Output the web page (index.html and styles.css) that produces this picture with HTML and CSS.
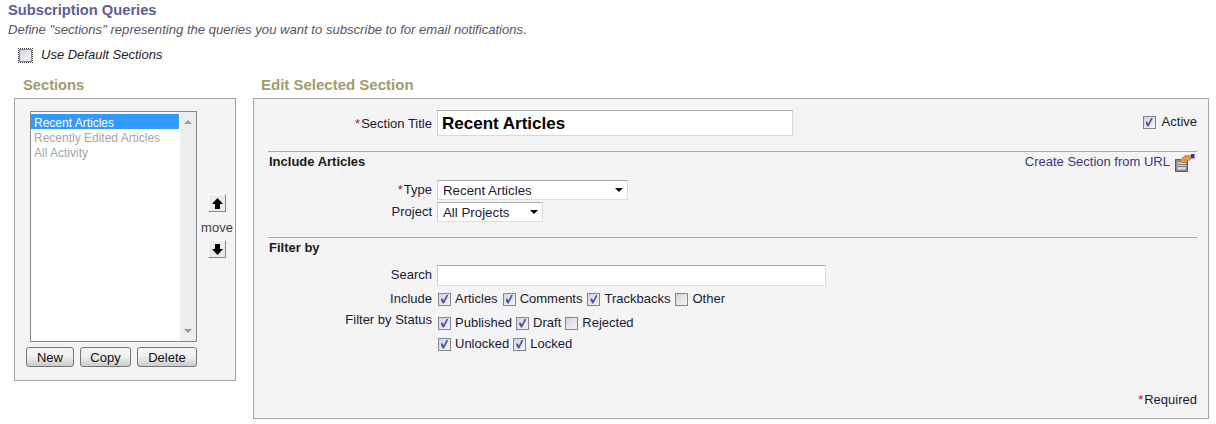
FILE: index.html
```html
<!DOCTYPE html>
<html lang="en">
<head>
  <meta charset="UTF-8">
  <title>Subscription Queries</title>
  <link rel="stylesheet" href="styles.css">
</head>
<body>
  <h1 class="page-title">Subscription Queries</h1>
  <p class="page-desc">Define "sections" representing the queries you want to subscribe to for email notifications.</p>
  <label class="default-row"><span class="cb default-cb"></span>Use Default Sections</label>

  <div class="columns">
    <div class="col-sections">
      <h2 class="col-title">Sections</h2>
      <div class="box sections-box">
        <div class="list-row">
          <div class="listbox">
            <div class="list-items">
              <div class="list-item selected">Recent Articles</div>
              <div class="list-item">Recently Edited Articles</div>
              <div class="list-item">All Activity</div>
            </div>
            <div class="scrollbar">
              <span class="scroll-up"></span>
              <span class="scroll-down"></span>
            </div>
          </div>
          <div class="move">
            <button class="move-btn">
              <svg width="13" height="13" viewBox="0 0 13 13"><path d="M6.5 1 12 7H9V12H4V7H1Z" fill="#000"/></svg>
            </button>
            <span class="move-label">move</span>
            <button class="move-btn">
              <svg width="13" height="13" viewBox="0 0 13 13"><path d="M6.5 12 12 6H9V1H4V6H1Z" fill="#000"/></svg>
            </button>
          </div>
        </div>
        <div class="list-actions">
          <button class="btn btn-new">New</button>
          <button class="btn btn-copy">Copy</button>
          <button class="btn btn-delete">Delete</button>
        </div>
      </div>
    </div>

    <div class="col-edit">
      <h2 class="col-title">Edit Selected Section</h2>
      <div class="box edit-box">
        <div class="title-row">
          <label class="field-label title-label"><span class="req">*</span>Section Title</label>
          <input class="title-input" type="text" value="Recent Articles">
          <label class="active"><span class="cb on"></span>Active</label>
        </div>

        <div class="group-head include-head">
          <span class="group-name">Include Articles</span>
          <a class="url-link">Create Section from URL
            <svg class="url-icon" width="20" height="18" viewBox="0 0 20 18">
              <path d="M.5 5.5H12.5V17.5H.5Z" fill="#8f8f8f" stroke="#5a5a5a"/>
              <path d="M2.5 8.5H10.5V15.5H2.5Z" fill="#dcdcdc"/>
              <path d="M2.5 10.5H10.5M2.5 12.5H10.5" stroke="#777"/>
              <path d="M5 6 10 1.5H15.5V5.5L11 7.5 8 9Z" fill="#e49a45" stroke="#a96c28" stroke-width=".6"/>
              <path d="M16 0H19.5V4.5H16Z" fill="#3a2fa8"/>
            </svg>
          </a>
        </div>
        <div class="field-row type-row">
          <label class="field-label"><span class="req">*</span>Type</label>
          <span class="select-wrap type-select"><select><option>Recent Articles</option></select></span>
        </div>
        <div class="field-row project-row">
          <label class="field-label">Project</label>
          <span class="select-wrap project-select"><select><option>All Projects</option></select></span>
        </div>

        <div class="group-head filter-head">
          <span class="group-name">Filter by</span>
        </div>
        <div class="field-row search-row">
          <label class="field-label">Search</label>
          <input class="search-input" type="text">
        </div>
        <div class="field-row include-row">
          <label class="field-label">Include</label>
          <div class="checks">
            <label class="check"><span class="cb on"></span>Articles</label>
            <label class="check"><span class="cb on"></span>Comments</label>
            <label class="check"><span class="cb on"></span>Trackbacks</label>
            <label class="check"><span class="cb"></span>Other</label>
          </div>
        </div>
        <div class="field-row status-row">
          <label class="field-label">Filter by Status</label>
          <div class="status-lines">
            <div class="checks">
              <label class="check"><span class="cb on"></span>Published</label>
              <label class="check"><span class="cb on"></span>Draft</label>
              <label class="check"><span class="cb"></span>Rejected</label>
            </div>
            <div class="checks">
              <label class="check"><span class="cb on"></span>Unlocked</label>
              <label class="check"><span class="cb on"></span>Locked</label>
            </div>
          </div>
        </div>
        <div class="required"><span class="req">*</span>Required</div>
      </div>
    </div>
  </div>
</body>
</html>
```

FILE: styles.css
```css
html, body { margin: 0; padding: 0; }
body { width: 1216px; height: 424px; overflow: hidden; background: #fff; color: #1a1a33; font-family: "Liberation Sans", Arial, sans-serif; font-size: 13px; line-height: 14px; padding: 2px 0 0 8px; box-sizing: border-box; }
button, input, select { font-family: inherit; }

.page-title { margin: 0; font-size: 14.7px; line-height: 16px; font-weight: bold; color: #5f5d92; }
.page-desc { margin: 5px 0 0; font-size: 13.1px; font-style: italic; color: #55555f; line-height: 14px; }
.default-row { display: flex; align-items: center; margin: 11px 0 0 11px; font-style: italic; color: #222; }
.default-cb { margin-right: 9px; outline: 1px dotted #444; outline-offset: 0; }

.columns { display: flex; margin: 15px 0 0 6px; }
.col-sections { width: 222px; }
.col-edit { width: 956px; margin-left: 17px; }
.col-title { margin: 0 0 5px 9px; font-size: 14.7px; line-height: 16px; font-weight: bold; color: #a19c6c; }
.col-edit .col-title { margin-left: 8px; font-size: 15px; }
.box { border: 1px solid #a3a3a3; background: #f4f4f4; box-sizing: border-box; }

.sections-box { height: 283px; padding: 12px 0 0 15px; }
.list-row { display: flex; }
.listbox { display: flex; width: 167px; height: 231px; border: 1px solid #87878f; background: #fff; box-sizing: border-box; }
.list-items { width: 148px; padding-top: 2px; }
.list-item { height: 15px; line-height: 19px; padding-left: 3px; color: #a3a3a8; font-size: 12px; }
.list-item.selected { background: #3399ff; color: #fff; }
.scrollbar { flex: 1; margin-left: 1px; background: linear-gradient(90deg, #ededed 50%, #f3f3f3 50%, #ededed 60%); display: flex; flex-direction: column; justify-content: space-between; align-items: center; padding: 8px 0; box-sizing: border-box; }
.scroll-up { border: 4px solid transparent; border-top: 0; border-bottom: 4px solid #9a9a9a; }
.scroll-down { border: 4px solid transparent; border-bottom: 0; border-top: 4px solid #9a9a9a; }

.move { display: flex; flex-direction: column; align-items: center; width: 36px; margin: 83px 0 0 2px; }
.move-btn { width: 18px; height: 18px; padding: 0; background: #ececec; border: 1px solid; border-color: #fff #888 #888 #fff; display: flex; align-items: center; justify-content: center; }
.move-label { margin: 9px 0 5px; color: #4a3a4a; }

.list-actions { display: flex; margin: 5px 0 0 -4px; }
.btn { height: 20px; padding: 0; font-size: 13px; color: #111; border: 1px solid #777; border-radius: 3px; background: linear-gradient(#f6f6f6, #f0f0f0 45%, #cbcbcb); }
.btn-new { width: 48px; }
.btn-copy { width: 51px; margin-left: 6px; }
.btn-delete { width: 60px; margin-left: 6px; }

.edit-box { height: 321px; padding: 11px 11px 0 14px; }
.field-label { width: 164px; margin-right: 5px; text-align: right; flex-shrink: 0; line-height: 20px; }
.title-label { padding-top: 2px; }
.req { color: #a01c2c; margin-right: 1px; }
.title-row { display: flex; align-items: center; }
.title-input { width: 356px; height: 26px; box-sizing: border-box; border: 1px solid #d8d8d8; border-top: 1px solid #aaa; border-left: 1px solid #ccc; background: #fff; padding: 2px 4px 0; font-size: 17px; font-weight: bold; color: #000; outline: none; }
.active { display: flex; align-items: center; margin-left: auto; position: relative; top: -1px; }
.active .cb { margin-right: 6px; }

.group-head { border-top: 1px solid #aaa; display: flex; justify-content: space-between; padding: 2px 0 0 1px; height: 20px; box-sizing: border-box; }
.group-name { font-weight: bold; color: #1a1a1a; line-height: 15px; }
.include-head { margin-top: 15px; }
.filter-head { margin-top: 15px; }
.url-link { display: flex; align-items: flex-start; color: #3a3a7c; line-height: 15px; margin-right: 1px; }
.url-icon { margin: 0 1px 0 5px; flex-shrink: 0; }

.field-row { display: flex; }
.type-row { margin-top: 9px; }
.project-row { margin-top: 2px; }
.select-wrap { position: relative; display: block; height: 20px; }
.select-wrap select { appearance: none; width: 100%; height: 100%; border: 1px solid #ddd; border-top-color: #aaa; border-left-color: #ccc; border-radius: 0; background: #fff; padding: 0 5px; font-size: 13.3px; color: #1a1a33; outline: none; }
.select-wrap::after { content: ""; position: absolute; right: 5px; top: 8px; border: 4px solid transparent; border-bottom: 0; border-top: 4px solid #000; }
.type-select { width: 191px; }
.project-select { width: 106px; }

.search-row { margin-top: 8px; }
.search-input { width: 389px; height: 21px; box-sizing: border-box; border: 1px solid #ddd; border-top-color: #aaa; border-left-color: #ccc; background: #fff; outline: none; }
.include-row { margin-top: 3px; }
.include-row .check { margin-right: 5px; }
.status-row { margin-top: 1px; }
.status-lines { padding-top: 3px; }
.status-lines .checks + .checks { margin-top: 1px; }
.checks { display: flex; height: 20px; align-items: center; margin-left: 1px; }
.check { display: flex; align-items: center; margin-right: 4px; }
.check .cb { margin-right: 4px; }

.cb { width: 13px; height: 13px; box-sizing: border-box; border: 1px solid #85858f; background: linear-gradient(135deg, #d4d4dc, #f4f4f6); display: inline-block; position: relative; flex-shrink: 0; }
.cb.on::after { content: ""; position: absolute; left: 2px; top: 1px; width: 7px; height: 9px; background: #4a55a0; clip-path: polygon(0 45%, 22% 45%, 38% 68%, 82% 0, 100% 0, 100% 15%, 42% 100%, 25% 100%, 0 65%); }

.required { text-align: right; margin-top: 39px; }
```
